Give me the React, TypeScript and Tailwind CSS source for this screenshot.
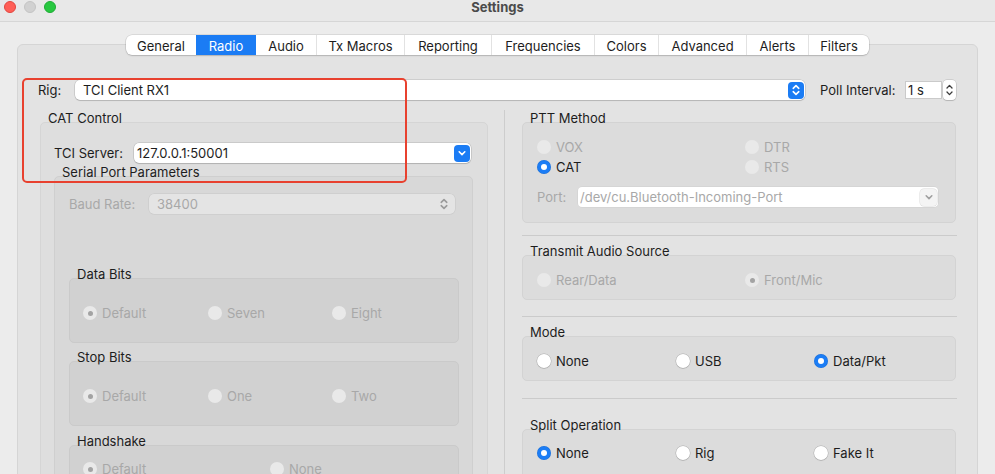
import React from 'react';
import clsx from 'clsx';

type RadioProps = { label: string; checked?: boolean; disabled?: boolean };

function Radio({ label, checked, disabled }: RadioProps) {
  return (
    <div className="flex h-[16px] items-center">
      <span
        className={clsx(
          'flex h-[14px] w-[14px] shrink-0 items-center justify-center rounded-full',
          disabled
            ? 'bg-[#e9e9e9]'
            : checked
              ? 'bg-[#1c7df5] shadow-[inset_0_0_0_0.5px_rgba(0,0,0,0.12)]'
              : 'bg-white shadow-[0_0_0_0.5px_rgba(0,0,0,0.22),0_1px_1px_rgba(0,0,0,0.08)]',
        )}
      >
        {checked && (
          <span
            className={clsx(
              'rounded-full',
              disabled ? 'h-[5px] w-[5px] bg-[#a3a3a3]' : 'h-[6px] w-[6px] bg-white',
            )}
          />
        )}
      </span>
      <span className={clsx('ml-[5px] pt-[2px]', disabled ? 'text-[#a8a8a8]' : 'text-[#1d1d1d]')}>{label}</span>
    </div>
  );
}

function Group({ title, box, children }: { title: string; box: string; children: React.ReactNode }) {
  return (
    <div>
      <div className="relative z-10 h-[12px] pl-[8px] leading-[16px] text-[#1d1d1d]">{title}</div>
      <div className={clsx('rounded-[5px] border', box)}>{children}</div>
    </div>
  );
}

function UpDown({ color }: { color: string }) {
  return (
    <svg width="16" height="16" viewBox="0 0 16 16" fill="none" stroke={color} strokeWidth="1.6" strokeLinecap="round" strokeLinejoin="round">
      <path d="M5.2 6.3 L8 3.6 L10.8 6.3" />
      <path d="M5.2 9.7 L8 12.4 L10.8 9.7" />
    </svg>
  );
}

function Down({ color }: { color: string }) {
  return (
    <svg width="16" height="16" viewBox="0 0 16 16" fill="none" stroke={color} strokeWidth="1.6" strokeLinecap="round" strokeLinejoin="round">
      <path d="M5.2 6.8 L8 9.6 L10.8 6.8" />
    </svg>
  );
}

const tabs = [
  { label: 'General', w: 'w-[70px]' },
  { label: 'Radio', w: 'w-[60px]' },
  { label: 'Audio', w: 'w-[60px]' },
  { label: 'Tx Macros', w: 'w-[88px]' },
  { label: 'Reporting', w: 'w-[87px]' },
  { label: 'Frequencies', w: 'w-[103px]' },
  { label: 'Colors', w: 'w-[64px]' },
  { label: 'Advanced', w: 'w-[88px]' },
  { label: 'Alerts', w: 'w-[62px]' },
  { label: 'Filters', w: 'w-[61px]' },
];

const field = 'shadow-[0_0_0_0.5px_rgba(0,0,0,0.18),0_1px_1px_rgba(0,0,0,0.12)]';

export default function App() {
  return (
    <div className="relative h-[474px] w-[995px] overflow-hidden bg-[#ececec] font-[Inter,sans-serif] text-[13px] text-[#1d1d1d]">
      {/* title bar */}
      <div className="flex h-[22px] items-start border-b border-[#d6d6d6] bg-[#e8e8e8] pt-[1px]">
        <div className="flex w-[56px] gap-[8px] pl-[4px]">
          <span className="h-[12px] w-[12px] rounded-full border border-[#e2463f] bg-[#ff5f57]" />
          <span className="h-[12px] w-[12px] rounded-full border border-[#c4c4c4] bg-[#d1d1d1]" />
          <span className="h-[12px] w-[12px] rounded-full border border-[#1fab35] bg-[#28c840]" />
        </div>
        <div className="flex-1 text-center text-[13px] font-bold leading-[12px] text-[#4b4b4b]">Settings</div>
        <div className="w-[56px]" />
      </div>

      <div className="px-[17px] pt-[13px]">
        {/* tabs */}
        <div className="relative z-10 flex justify-center">
          <div className="flex h-[20px] overflow-hidden rounded-[6px] bg-white shadow-[0_0_0_0.5px_rgba(0,0,0,0.15),0_1px_1.5px_rgba(0,0,0,0.15)]">
            {tabs.map((t, i) => {
              const sel = t.label === 'Radio';
              const prevSel = i > 0 && tabs[i - 1].label === 'Radio';
              return (
                <div
                  key={t.label}
                  className={clsx(
                    'flex items-center justify-center pt-[3px]',
                    t.w,
                    sel ? 'bg-[#1b7cf4] text-white' : 'text-[#1d1d1d]',
                    i > 0 && !sel && !prevSel && 'border-l border-[#e2e2e2]',
                  )}
                >
                  {t.label}
                </div>
              );
            })}
          </div>
        </div>

        {/* panel */}
        <div className="-mt-[11px] h-[600px] rounded-[6px] border border-[#d5d5d5] bg-[#e3e3e3] pl-[20px] pt-[35px]">
          {/* rig row */}
          <div className="flex h-[20px] items-center">
            <span className="w-[37px] pt-[2px]">Rig:</span>
            <div className={clsx('flex h-[20px] w-[730px] items-center rounded-[5px] bg-white pl-[8px] pr-[1px]', field)}>
              <span className="flex-1 pt-[2px]">TCI Client RX1</span>
              <span className="flex h-[17px] w-[16px] items-center justify-center rounded-[4px] bg-[#1b7cf4]">
                <UpDown color="#ffffff" />
              </span>
            </div>
            <span className="ml-[15px] w-[85px] pt-[2px]">Poll Interval:</span>
            <div className="flex h-[18px] w-[37px] items-center border border-[#cacaca] bg-white pl-[2px] pt-[2px]">1 s</div>
            <div className={clsx('ml-[1px] flex h-[20px] w-[13px] items-center justify-center rounded-[4px] bg-white', field)}>
              <svg width="9" height="16" viewBox="0 0 9 16" fill="none" stroke="#3a3a3a" strokeWidth="1.3" strokeLinecap="round" strokeLinejoin="round">
                <path d="M2 6 L4.5 3.4 L7 6" />
                <path d="M2 10 L4.5 12.6 L7 10" />
              </svg>
            </div>
          </div>

          {/* columns */}
          <div className="mt-[10px] flex">
            {/* left column */}
            <div className="ml-[2px] w-[448px]">
              <Group title="CAT Control" box="border-[#d5d5d5] bg-[#dedede] pb-[40px] pl-[13px] pr-[14px] pt-[20px]">
                <div className="flex h-[20px] items-center">
                  <span className="w-[80px] pt-[2px]">TCI Server:</span>
                  <div className={clsx('flex h-[20px] w-[337px] items-center rounded-[5px] bg-white pl-[3px] pr-[1px]', field)}>
                    <span className="flex-1 pt-[2px]">127.0.0.1:50001</span>
                    <span className="flex h-[17px] w-[16px] items-center justify-center rounded-[4px] bg-[#1b7cf4]">
                      <Down color="#ffffff" />
                    </span>
                  </div>
                </div>
                <div className="mt-[1px]">
                  <Group title="Serial Port Parameters" box="border-[#cfcfcf] bg-[#d8d8d8] pb-[40px] pl-[14px] pr-[13px] pt-[17px]">
                    <div className="flex h-[20px] items-center">
                      <span className="w-[80px] pt-[2px] text-[#a8a8a8]">Baud Rate:</span>
                      <div className="flex h-[20px] w-[306px] items-center rounded-[5px] bg-[#e4e4e4] pl-[8px] pr-[3px] shadow-[0_0_0_0.5px_rgba(0,0,0,0.08)]">
                        <span className="flex-1 pt-[2px] text-[#a8a8a8]">38400</span>
                        <UpDown color="#9a9a9a" />
                      </div>
                    </div>
                    <div className="mt-[52px]">
                      <Group title="Data Bits" box="border-[#cacaca] bg-[#d1d1d1] pb-[21px] pl-[13px] pt-[26px]">
                        <div className="grid grid-cols-[125px_124px_1fr]">
                          <Radio label="Default" checked disabled />
                          <Radio label="Seven" disabled />
                          <Radio label="Eight" disabled />
                        </div>
                      </Group>
                    </div>
                    <div className="mt-[6px]">
                      <Group title="Stop Bits" box="border-[#cacaca] bg-[#d1d1d1] pb-[21px] pl-[13px] pt-[26px]">
                        <div className="grid grid-cols-[125px_124px_1fr]">
                          <Radio label="Default" checked disabled />
                          <Radio label="One" disabled />
                          <Radio label="Two" disabled />
                        </div>
                      </Group>
                    </div>
                    <div className="mt-[7px]">
                      <Group title="Handshake" box="border-[#cacaca] bg-[#d1d1d1] pb-[20px] pl-[13px] pt-[15px]">
                        <div className="grid grid-cols-[187px_1fr]">
                          <Radio label="Default" checked disabled />
                          <Radio label="None" disabled />
                        </div>
                      </Group>
                    </div>
                  </Group>
                </div>
              </Group>
            </div>

            {/* right column */}
            <div className="ml-[16px] w-[473px] border-l border-[#cdcdcd] pl-[17px]">
              <Group title="PTT Method" box="w-[434px] border-[#d3d3d3] bg-[#dcdcdc] pb-[15px] pl-[14px] pr-[17px] pt-[16px]">
                <div className="grid grid-cols-[208px_1fr] gap-y-[4px]">
                  <Radio label="VOX" disabled />
                  <Radio label="DTR" disabled />
                  <Radio label="CAT" checked />
                  <Radio label="RTS" disabled />
                </div>
                <div className="mt-[12px] flex h-[20px] items-center">
                  <span className="w-[41px] pt-[2px] text-[#a8a8a8]">Port:</span>
                  <div className="flex h-[20px] w-[360px] items-center rounded-[4px] bg-white pl-[2px] pr-[1px] shadow-[0_0_0_0.5px_rgba(0,0,0,0.06)]">
                    <span className="flex-1 pt-[2px] text-[#a8a8a8]">/dev/cu.Bluetooth-Incoming-Port</span>
                    <span className="flex h-[17px] w-[17px] items-center justify-center rounded-[4px] bg-[#f4f4f4] shadow-[0_0_0_0.5px_rgba(0,0,0,0.15)]">
                      <Down color="#a0a0a0" />
                    </span>
                  </div>
                </div>
              </Group>

              <div className="mt-[12px] h-px w-[435px] bg-[#cbcbcb]" />

              <div className="mt-[7px]">
                <Group title="Transmit Audio Source" box="w-[434px] border-[#d3d3d3] bg-[#dcdcdc] pb-[11px] pl-[14px] pt-[16px]">
                  <div className="grid grid-cols-[208px_1fr]">
                    <Radio label="Rear/Data" disabled />
                    <Radio label="Front/Mic" checked disabled />
                  </div>
                </Group>
              </div>

              <div className="mt-[16px] h-px w-[435px] bg-[#cbcbcb]" />

              <div className="mt-[7px]">
                <Group title="Mode" box="w-[434px] border-[#d3d3d3] bg-[#dcdcdc] pb-[11px] pl-[14px] pt-[16px]">
                  <div className="grid grid-cols-[139px_138px_1fr]">
                    <Radio label="None" />
                    <Radio label="USB" />
                    <Radio label="Data/Pkt" checked />
                  </div>
                </Group>
              </div>

              <div className="mt-[17px] h-px w-[435px] bg-[#cbcbcb]" />

              <div className="mt-[18px]">
                <Group title="Split Operation" box="w-[434px] border-[#d3d3d3] bg-[#dcdcdc] pb-[20px] pl-[14px] pt-[15px]">
                  <div className="grid grid-cols-[139px_138px_1fr]">
                    <Radio label="None" checked />
                    <Radio label="Rig" />
                    <Radio label="Fake It" />
                  </div>
                </Group>
              </div>
            </div>
          </div>
        </div>
      </div>

      {/* red highlight annotation */}
      <div className="pointer-events-none absolute left-[22px] top-[78px] h-[105px] w-[385px] rounded-[5px] border-[2.5px] border-[#e8412f]" />
    </div>
  );
}
